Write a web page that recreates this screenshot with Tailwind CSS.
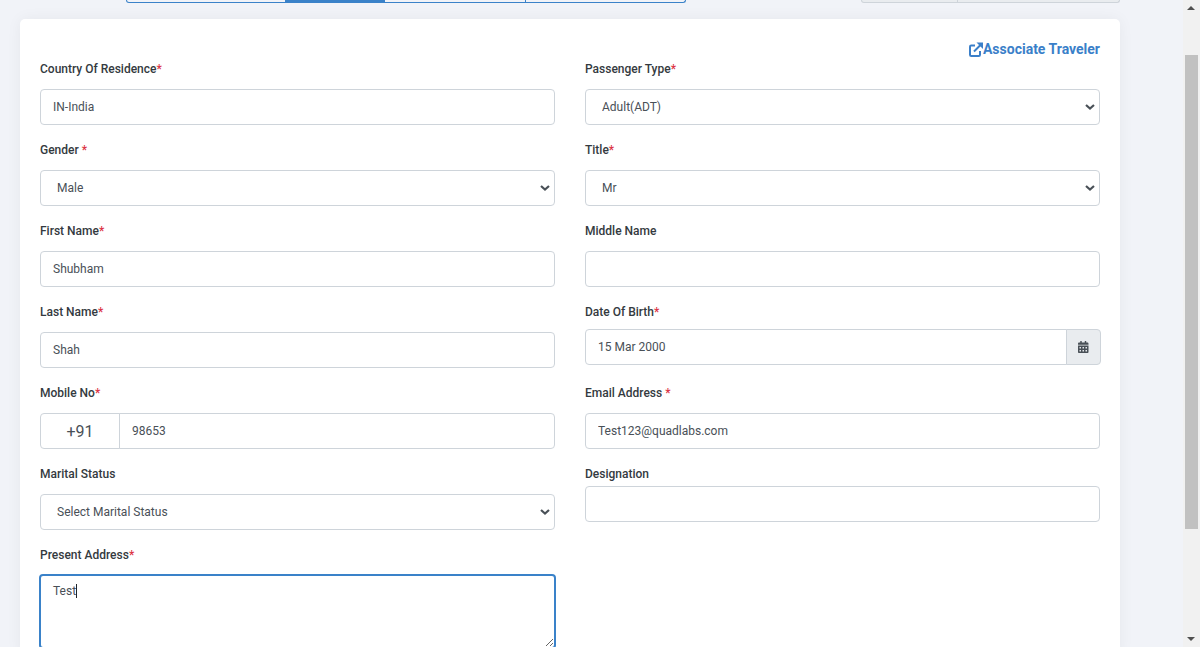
<!DOCTYPE html>
<html lang="en">

<head>
    <meta charset="UTF-8">
    <meta name="viewport" content="width=device-width, initial-scale=1.0">
    <title>Traveler Details</title>
    <script src="https://cdn.jsdelivr.net/npm/@tailwindcss/browser@4"></script>
</head>

<body class="h-[647px] overflow-hidden bg-[#f1f3f8] font-['Roboto',sans-serif] text-[12px] text-[#495057]">
    <div class="flex h-[647px]">
        <main class="w-[1183px] overflow-hidden">

            <!-- Top of the steps and action buttons, mostly scrolled away -->
            <div class="flex h-[19px] pl-[126px]">
                <div class="flex h-[3px] w-[560px] rounded-b-[4px] border-x border-b border-[#3a82c9]">
                    <div class="w-[158px]"></div>
                    <div class="w-[100px] bg-[#3a82c9]"></div>
                    <div class="w-[140px]"></div>
                    <div class="flex-1 border-l border-[#3a82c9]"></div>
                </div>
                <div class="ml-[175px] flex h-[3px] w-[259px] rounded-b-[4px] border-x border-b border-[#ced4da] bg-[#e9ecef]">
                    <div class="w-[95px]"></div>
                    <div class="flex-1 border-l border-[#ced4da]"></div>
                </div>
            </div>

            <!-- Traveler form -->
            <div class="ml-5 h-[640px] w-[1100px] rounded-[5px] bg-white px-5 pt-[21px] shadow-[0_0_15px_rgba(0,0,0,0.05)]">
                <div class="-mb-[2px] flex h-[18px] items-center justify-end text-[14px] font-bold text-[#3a7fc9]">
                    <svg class="h-[15px] w-[14px]" viewBox="0 0 14 15" fill="none" stroke="#3a7fc9" stroke-width="2">
                        <path d="M6 3.5H2.2A1.2 1.2 0 0 0 1 4.7v8.1A1.2 1.2 0 0 0 2.2 14h7.6A1.2 1.2 0 0 0 11 12.800V9" />
                        <path d="M5 9.500 12 2.500" />
                        <path d="M7.500 0.500h6.500v6.500z" stroke="none" fill="#3a7fc9" />
                    </svg>
                    <a href="#">Associate Traveler</a>
                </div>

                <div class="grid grid-cols-[515px_515px] gap-x-[30px]">

                    <div class="h-[81px]">
                        <label class="block h-[33px] pt-[5px] leading-[16px] font-medium text-[#343a40]">Country Of Residence<span class="text-[#dc3545]">*</span></label>
                        <input type="text" value="IN-India" class="h-[36px] w-full rounded-[4px] border border-[#ced4da] px-3 text-[#495057]">
                    </div>
                    <div class="h-[81px]">
                        <label class="block h-[33px] pt-[5px] leading-[16px] font-medium text-[#343a40]">Passenger Type<span class="text-[#dc3545]">*</span></label>
                        <div class="relative">
                            <select class="h-[36px] w-full appearance-none rounded-[4px] border border-[#ced4da] bg-white pl-4 text-[#495057]">
                                <option>Adult(ADT)</option>
                            </select>
                            <svg class="pointer-events-none absolute top-[15px] right-[5px] h-[6px] w-[10px]" viewBox="0 0 10 6" fill="none" stroke="#495057" stroke-width="2.200"><path d="M1 1l4 3.500 4-3.500" /></svg>
                        </div>
                    </div>

                    <div class="h-[81px]">
                        <label class="block h-[33px] pt-[5px] leading-[16px] font-medium text-[#343a40]">Gender <span class="text-[#dc3545]">*</span></label>
                        <div class="relative">
                            <select class="h-[36px] w-full appearance-none rounded-[4px] border border-[#ced4da] bg-white pl-4 text-[#495057]">
                                <option>Male</option>
                            </select>
                            <svg class="pointer-events-none absolute top-[15px] right-[5px] h-[6px] w-[10px]" viewBox="0 0 10 6" fill="none" stroke="#495057" stroke-width="2.200"><path d="M1 1l4 3.500 4-3.500" /></svg>
                        </div>
                    </div>
                    <div class="h-[81px]">
                        <label class="block h-[33px] pt-[5px] leading-[16px] font-medium text-[#343a40]">Title<span class="text-[#dc3545]">*</span></label>
                        <div class="relative">
                            <select class="h-[36px] w-full appearance-none rounded-[4px] border border-[#ced4da] bg-white pl-4 text-[#495057]">
                                <option>Mr</option>
                            </select>
                            <svg class="pointer-events-none absolute top-[15px] right-[5px] h-[6px] w-[10px]" viewBox="0 0 10 6" fill="none" stroke="#495057" stroke-width="2.200"><path d="M1 1l4 3.500 4-3.500" /></svg>
                        </div>
                    </div>

                    <div class="h-[81px]">
                        <label class="block h-[33px] pt-[5px] leading-[16px] font-medium text-[#343a40]">First Name<span class="text-[#dc3545]">*</span></label>
                        <input type="text" value="Shubham" class="h-[36px] w-full rounded-[4px] border border-[#ced4da] px-3 text-[#495057]">
                    </div>
                    <div class="h-[81px]">
                        <label class="block h-[33px] pt-[5px] leading-[16px] font-medium text-[#343a40]">Middle Name</label>
                        <input type="text" class="h-[36px] w-full rounded-[4px] border border-[#ced4da] px-3 text-[#495057]">
                    </div>

                    <div class="h-[81px]">
                        <label class="block h-[33px] pt-[5px] leading-[16px] font-medium text-[#343a40]">Last Name<span class="text-[#dc3545]">*</span></label>
                        <input type="text" value="Shah" class="h-[36px] w-full rounded-[4px] border border-[#ced4da] px-3 text-[#495057]">
                    </div>
                    <div class="h-[81px]">
                        <label class="block h-[30px] pt-[5px] leading-[16px] font-medium text-[#343a40]">Date Of Birth<span class="text-[#dc3545]">*</span></label>
                        <div class="flex h-[36px] w-[516px]">
                            <input type="text" value="15 Mar 2000" class="h-full min-w-0 flex-1 rounded-l-[4px] border border-[#ced4da] px-3 text-[#495057]">
                            <div class="-ml-px flex w-[35px] items-center justify-center rounded-r-[4px] border border-[#ced4da] bg-[#e9ecef]">
                                <svg class="h-[12px] w-[10.5px]" viewBox="0 0 448 512" fill="#495057"><path d="M0 464c0 26.5 21.5 48 48 48h352c26.5 0 48-21.5 48-48V192H0v272zm320-196c0-6.6 5.4-12 12-12h40c6.6 0 12 5.4 12 12v40c0 6.6-5.4 12-12 12h-40c-6.6 0-12-5.4-12-12v-40zm0 128c0-6.6 5.4-12 12-12h40c6.6 0 12 5.4 12 12v40c0 6.6-5.4 12-12 12h-40c-6.6 0-12-5.4-12-12v-40zM192 268c0-6.6 5.4-12 12-12h40c6.6 0 12 5.4 12 12v40c0 6.6-5.4 12-12 12h-40c-6.6 0-12-5.4-12-12v-40zm0 128c0-6.6 5.4-12 12-12h40c6.6 0 12 5.4 12 12v40c0 6.6-5.4 12-12 12h-40c-6.6 0-12-5.4-12-12v-40zM64 268c0-6.6 5.4-12 12-12h40c6.6 0 12 5.4 12 12v40c0 6.6-5.4 12-12 12H76c-6.6 0-12-5.4-12-12v-40zm0 128c0-6.6 5.4-12 12-12h40c6.6 0 12 5.4 12 12v40c0 6.6-5.4 12-12 12H76c-6.6 0-12-5.4-12-12v-40zM400 64h-48V16c0-8.8-7.2-16-16-16h-32c-8.8 0-16 7.2-16 16v48H160V16c0-8.8-7.2-16-16-16h-32c-8.8 0-16 7.2-16 16v48H48C21.5 64 0 85.5 0 112v48h448v-48c0-26.5-21.5-48-48-48z" /></svg>
                            </div>
                        </div>
                    </div>

                    <div class="h-[81px]">
                        <label class="block h-[33px] pt-[5px] leading-[16px] font-medium text-[#343a40]">Mobile No<span class="text-[#dc3545]">*</span></label>
                        <div class="flex h-[36px]">
                            <div class="flex w-[80px] items-center justify-center rounded-l-[4px] border border-[#ced4da] pt-px text-[16px]">+91</div>
                            <input type="text" value="98653" class="-ml-px h-full min-w-0 flex-1 rounded-r-[4px] border border-[#ced4da] px-3 text-[#495057]">
                        </div>
                    </div>
                    <div class="h-[81px]">
                        <label class="block h-[33px] pt-[5px] leading-[16px] font-medium text-[#343a40]">Email Address <span class="text-[#dc3545]">*</span></label>
                        <input type="text" value="Test123@quadlabs.com" class="h-[36px] w-full rounded-[4px] border border-[#ced4da] px-3 text-[#495057]">
                    </div>

                    <div class="h-[81px]">
                        <label class="block h-[33px] pt-[5px] leading-[16px] font-medium text-[#343a40]">Marital Status</label>
                        <div class="relative">
                            <select class="h-[36px] w-full appearance-none rounded-[4px] border border-[#ced4da] bg-white pl-4 text-[#495057]">
                                <option>Select Marital Status</option>
                            </select>
                            <svg class="pointer-events-none absolute top-[15px] right-[5px] h-[6px] w-[10px]" viewBox="0 0 10 6" fill="none" stroke="#495057" stroke-width="2.200"><path d="M1 1l4 3.500 4-3.500" /></svg>
                        </div>
                    </div>
                    <div class="h-[81px]">
                        <label class="block h-[25px] pt-[5px] leading-[16px] font-medium text-[#343a40]">Designation</label>
                        <input type="text" class="h-[36px] w-full rounded-[4px] border border-[#ced4da] px-3 text-[#495057]">
                    </div>

                    <div>
                        <label class="block h-[32px] pt-[5px] leading-[16px] font-medium text-[#343a40]">Present Address<span class="text-[#dc3545]">*</span></label>
                        <div class="relative -mx-px h-[75px]">
                            <textarea class="block h-[75px] w-full rounded-[4px] border-2 border-[#3a82c9] px-3 py-[6px] leading-[18px] text-[#495057] outline-none">Test</textarea>
                            <span class="absolute top-[10px] left-[37px] h-[14px] w-px bg-[#212529]"></span>
                        </div>
                    </div>
                    <div></div>

                </div>
            </div>
        </main>

        <!-- Page scrollbar -->
        <aside class="relative w-[17px] shrink-0 bg-[#f1f1f1]">
            <span class="absolute top-[6px] left-[4px] h-0 w-0 border-x-[4px] border-b-[4px] border-x-transparent border-b-[#505050]"></span>
            <div class="absolute top-[55px] left-[2px] h-[474px] w-[13px] bg-[#c1c1c1]"></div>
            <span class="absolute bottom-[6px] left-[4px] h-0 w-0 border-x-[4px] border-t-[4px] border-x-transparent border-t-[#505050]"></span>
        </aside>
    </div>
</body>

</html>
